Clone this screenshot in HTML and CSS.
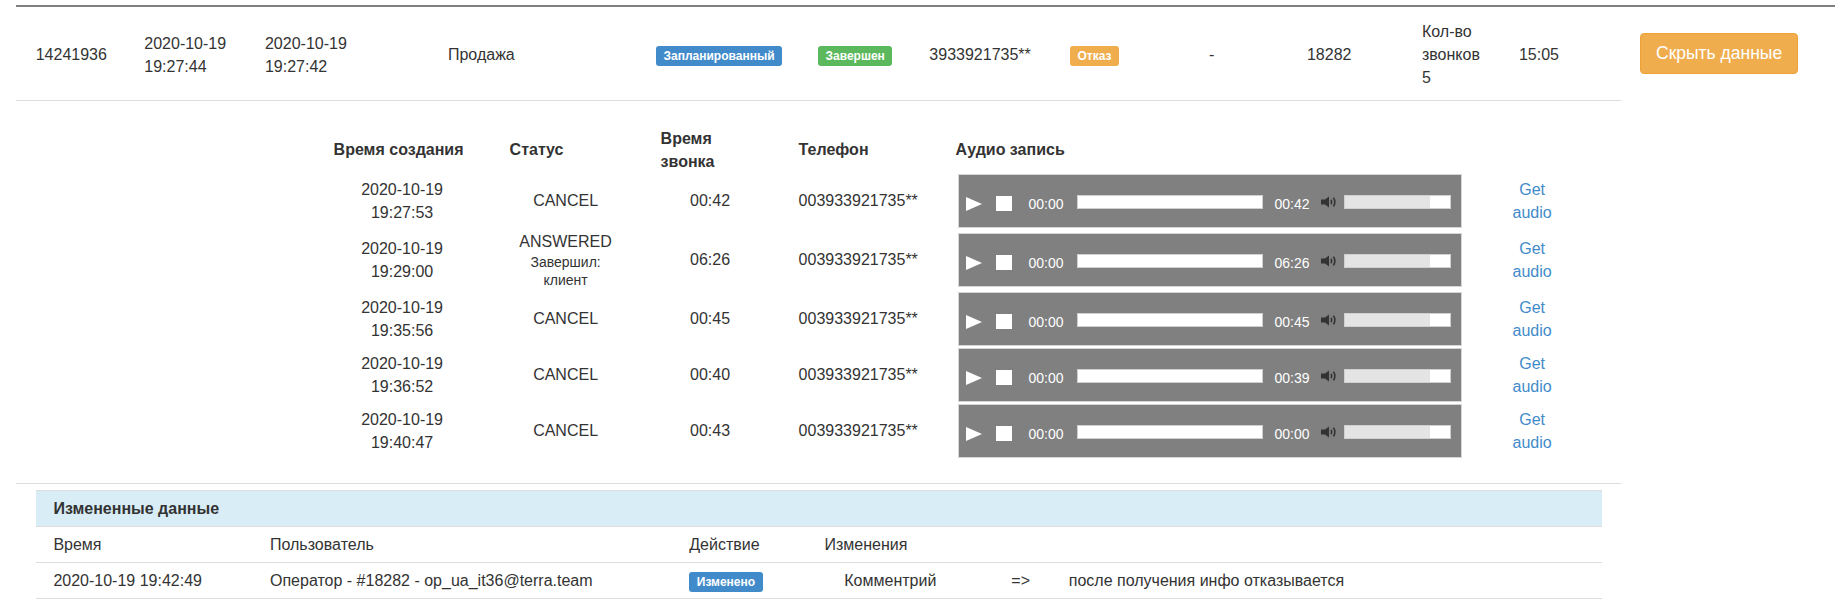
FILE: index.html
```html
<!DOCTYPE html>
<html lang="ru">
<head>
<meta charset="utf-8">
<title>Заказ 14241936</title>
<link rel="stylesheet" href="styles.css">
</head>
<body>
<div class="record">
  <div class="record-body">
    <div class="summary">
      <div class="summary-row">
        <div class="c">14241936</div>
        <div class="c"><span class="ln">2020-10-19</span><span class="ln">19:27:44</span></div>
        <div class="c"><span class="ln">2020-10-19</span><span class="ln">19:27:42</span></div>
        <div class="c">Продажа</div>
        <div class="c"><span class="label label-primary">Запланированный</span></div>
        <div class="c"><span class="label label-success">Завершен</span></div>
        <div class="c">3933921735**</div>
        <div class="c"><span class="label label-warning">Отказ</span></div>
        <div class="c">-</div>
        <div class="c">18282</div>
        <div class="c"><span class="cnt">Кол-во звонков 5</span></div>
        <div class="c">15:05</div>
      </div>

      <div class="details">
        <div class="calls-row calls-head">
          <div class="th">Время создания</div>
          <div class="th">Статус</div>
          <div class="th">Время звонка</div>
          <div class="th">Телефон</div>
          <div class="th">Аудио запись</div>
          <div class="th"></div>
        </div>

        <div class="calls-row">
          <div class="td"><span class="ln">2020-10-19</span><span class="ln">19:27:53</span></div>
          <div class="td">CANCEL</div>
          <div class="td">00:42</div>
          <div class="td td-phone">003933921735**</div>
          <div class="td td-player">
            <div class="player">
              <span class="pl-play"></span><span class="pl-stop"></span>
              <span class="pl-time">00:00</span><span class="pl-rail"></span>
              <span class="pl-time pl-dur">00:42</span>
              <svg class="pl-vol" width="17" height="12" viewBox="0 0 17 12"><path d="M0 3.5h4L8 0.5v11L4 8.5H0z" fill="#333"/><path d="M10 3.8q1.4 2.2 0 4.4M12.4 1.6q2.9 4.4 0 8.8" fill="none" stroke="#333" stroke-width="1.6"/></svg>
              <span class="pl-vbar"><span class="pl-vfill"></span></span>
            </div>
          </div>
          <div class="td"><a class="get-audio" href="#">Get audio</a></div>
        </div>

        <div class="calls-row">
          <div class="td"><span class="ln">2020-10-19</span><span class="ln">19:29:00</span></div>
          <div class="td">ANSWERED<span class="note">Завершил:</span><span class="note">клиент</span></div>
          <div class="td">06:26</div>
          <div class="td td-phone">003933921735**</div>
          <div class="td td-player">
            <div class="player">
              <span class="pl-play"></span><span class="pl-stop"></span>
              <span class="pl-time">00:00</span><span class="pl-rail"></span>
              <span class="pl-time pl-dur">06:26</span>
              <svg class="pl-vol" width="17" height="12" viewBox="0 0 17 12"><path d="M0 3.5h4L8 0.5v11L4 8.5H0z" fill="#333"/><path d="M10 3.8q1.4 2.2 0 4.4M12.4 1.6q2.9 4.4 0 8.8" fill="none" stroke="#333" stroke-width="1.6"/></svg>
              <span class="pl-vbar"><span class="pl-vfill"></span></span>
            </div>
          </div>
          <div class="td"><a class="get-audio" href="#">Get audio</a></div>
        </div>

        <div class="calls-row">
          <div class="td"><span class="ln">2020-10-19</span><span class="ln">19:35:56</span></div>
          <div class="td">CANCEL</div>
          <div class="td">00:45</div>
          <div class="td td-phone">003933921735**</div>
          <div class="td td-player">
            <div class="player">
              <span class="pl-play"></span><span class="pl-stop"></span>
              <span class="pl-time">00:00</span><span class="pl-rail"></span>
              <span class="pl-time pl-dur">00:45</span>
              <svg class="pl-vol" width="17" height="12" viewBox="0 0 17 12"><path d="M0 3.5h4L8 0.5v11L4 8.5H0z" fill="#333"/><path d="M10 3.8q1.4 2.2 0 4.4M12.4 1.6q2.9 4.4 0 8.8" fill="none" stroke="#333" stroke-width="1.6"/></svg>
              <span class="pl-vbar"><span class="pl-vfill"></span></span>
            </div>
          </div>
          <div class="td"><a class="get-audio" href="#">Get audio</a></div>
        </div>

        <div class="calls-row">
          <div class="td"><span class="ln">2020-10-19</span><span class="ln">19:36:52</span></div>
          <div class="td">CANCEL</div>
          <div class="td">00:40</div>
          <div class="td td-phone">003933921735**</div>
          <div class="td td-player">
            <div class="player">
              <span class="pl-play"></span><span class="pl-stop"></span>
              <span class="pl-time">00:00</span><span class="pl-rail"></span>
              <span class="pl-time pl-dur">00:39</span>
              <svg class="pl-vol" width="17" height="12" viewBox="0 0 17 12"><path d="M0 3.5h4L8 0.5v11L4 8.5H0z" fill="#333"/><path d="M10 3.8q1.4 2.2 0 4.4M12.4 1.6q2.9 4.4 0 8.8" fill="none" stroke="#333" stroke-width="1.6"/></svg>
              <span class="pl-vbar"><span class="pl-vfill"></span></span>
            </div>
          </div>
          <div class="td"><a class="get-audio" href="#">Get audio</a></div>
        </div>

        <div class="calls-row">
          <div class="td"><span class="ln">2020-10-19</span><span class="ln">19:40:47</span></div>
          <div class="td">CANCEL</div>
          <div class="td">00:43</div>
          <div class="td td-phone">003933921735**</div>
          <div class="td td-player">
            <div class="player">
              <span class="pl-play"></span><span class="pl-stop"></span>
              <span class="pl-time">00:00</span><span class="pl-rail"></span>
              <span class="pl-time pl-dur">00:00</span>
              <svg class="pl-vol" width="17" height="12" viewBox="0 0 17 12"><path d="M0 3.5h4L8 0.5v11L4 8.5H0z" fill="#333"/><path d="M10 3.8q1.4 2.2 0 4.4M12.4 1.6q2.9 4.4 0 8.8" fill="none" stroke="#333" stroke-width="1.6"/></svg>
              <span class="pl-vbar"><span class="pl-vfill"></span></span>
            </div>
          </div>
          <div class="td"><a class="get-audio" href="#">Get audio</a></div>
        </div>
      </div>

      <div class="changes">
        <div class="ch-title">Измененные данные</div>
        <div class="ch-row">
          <div>Время</div>
          <div>Пользователь</div>
          <div>Действие</div>
          <div>Изменения</div>
        </div>
        <div class="ch-row">
          <div>2020-10-19 19:42:49</div>
          <div>Оператор - #18282 - op_ua_it36@terra.team</div>
          <div><span class="label label-primary">Изменено</span></div>
          <div class="diff"><span class="diff-field">Комментрий</span><span class="diff-arrow">=&gt;</span><span>после получения инфо отказывается</span></div>
        </div>
      </div>
    </div>
    <div class="actions"><button class="btn btn-warning" type="button">Скрыть данные</button></div>
  </div>
</div>
</body>
</html>
```

FILE: styles.css
```css
* { box-sizing: border-box; }
html, body { margin: 0; padding: 0; background: #fff; }
body {
  font-family: "Liberation Sans", Arial, Helvetica, sans-serif;
  font-size: 16px;
  line-height: 23px;
  color: #333;
  width: 1835px;
}

.record { margin: 5px 0 0 16px; border-top: 2px solid #808080; }
.record-body { display: flex; align-items: flex-start; }
.summary { width: 1605px; flex: none; }
.actions { padding: 26px 0 0 19px; }

.btn {
  font-family: inherit;
  font-size: 17.5px;
  line-height: 23px;
  padding: 8px 15px;
  border: 1px solid #eea236;
  border-radius: 4px;
  background: #f0ad4e;
  color: #fff;
  cursor: pointer;
}

.summary-row {
  display: grid;
  grid-template-columns: 108.6px 120.7px 183px 208px 162px 111.4px 140.6px 139px 98px 115px 97px 102px;
  align-items: center;
  height: 94px;
  padding: 2px 0 0 19.7px;
  border-bottom: 1px solid #ddd;
}
.ln { display: block; }
.cnt { display: block; width: 66px; }

.label {
  display: inline-block;
  padding: 3px 7.5px;
  font-size: 12px;
  font-weight: bold;
  line-height: 14px;
  color: #fff;
  border-radius: 3px;
  white-space: nowrap;
}
.label-primary { background: #428bca; }
.label-success { background: #5cb85c; }
.label-warning { background: #f0ad4e; }

/* calls detail */
.details {
  padding: 25.5px 0 24.5px 309.6px;
  border-bottom: 1px solid #ddd;
}
.calls-row {
  display: grid;
  grid-template-columns: 153px 128px 115px 134px 520px 83px;
  column-gap: 23px;
  align-items: center;
}
.calls-head { min-height: 46px; }
.th { padding: 0 8px; font-weight: bold; }
.td { padding: 1px 8px; text-align: center; }
.td-phone { text-align: left; }
.td-player { text-align: left; }
.note { display: block; font-size: 14px; line-height: 18.5px; }
.get-audio { color: #428bca; text-decoration: none; }

.player {
  display: flex;
  align-items: center;
  width: 504px;
  height: 54px;
  margin-left: 2px;
  padding: 6px 0 0 7.6px;
  background: #808080;
  border: 1px solid #d6d6d6;
}
.pl-play {
  width: 0;
  height: 0;
  border-left: 16px solid #fff;
  border-top: 7.5px solid transparent;
  border-bottom: 7.5px solid transparent;
}
.pl-stop {
  width: 16px;
  height: 15px;
  margin-left: 13.7px;
  background: #fff;
}
.pl-time {
  margin-left: 16.6px;
  font-size: 14px;
  line-height: 16px;
  color: #fff;
}
.pl-rail {
  width: 185.6px;
  height: 14px;
  margin-left: 13.4px;
  margin-bottom: 3px;
  background: #fff;
  border: 1px solid #d0d0d0;
}
.pl-dur { margin-left: 12px; }
.pl-vol { margin-left: 11px; margin-bottom: 3px; flex: none; }
.pl-vbar {
  display: flex;
  width: 107px;
  height: 14px;
  margin-left: 6px;
  margin-bottom: 3px;
  background: #fff;
  border: 1px solid #d0d0d0;
}
.pl-vfill { width: 85px; background: #e4e4e4; }

/* changes */
.changes { margin: 5.5px 0 0 19.6px; width: 1566.4px; }
.ch-title {
  background: #d9edf7;
  border-top: 1px solid #ddd;
  padding: 6.2px 17.8px;
  font-weight: bold;
}
.ch-row {
  display: grid;
  grid-template-columns: 216.6px 419.3px 135.2px 1fr;
  align-items: center;
  border-top: 1px solid #ddd;
}
.ch-row > div { padding: 6px 0 6px 17.8px; }
.ch-row:last-child { border-bottom: 1px solid #ddd; }
.diff { display: flex; }
.diff-field { margin-left: 19.8px; width: 167.1px; }
.diff-arrow { width: 57.4px; }
```
